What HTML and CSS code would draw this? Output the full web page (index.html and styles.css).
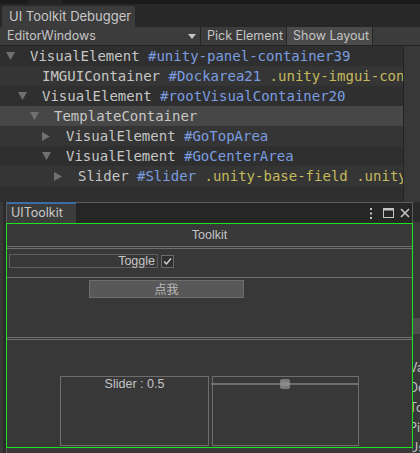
FILE: index.html
```html
<!DOCTYPE html>
<html>
<head>
<meta charset="utf-8">
<link rel="stylesheet" href="styles.css">
</head>
<body>
<div class="app">
  <div class="topstrip"><span class="ts-a"></span></div>
  <div class="tabbar"><div class="tab">UI Toolkit Debugger</div></div>
  <div class="toolbar">
    <div class="dropdown"><span>EditorWindows</span><svg class="ddarrow" width="8" height="5" viewBox="0 0 8 5"><polygon points="0,0 8,0 4,5" fill="#c4c4c4"/></svg></div>
    <div class="tbtn pick">Pick Element</div>
    <div class="tbtn on">Show Layout</div>
    <div class="tfill"></div>
  </div>
  <div class="treepane">
    <div class="tree">
      <div class="row dark l0"><span class="arr"><svg width="9" height="8" viewBox="0 0 9 8"><polygon points="0,0 9,0 4.5,8" fill="#707070"/></svg></span><span class="t">VisualElement</span> <span class="n">#unity-panel-container39</span></div>
      <div class="row light l1"><span class="arr"></span><span class="t">IMGUIContainer</span> <span class="n">#Dockarea21</span> <span class="c">.unity-imgui-container</span></div>
      <div class="row dark l1"><span class="arr"><svg width="9" height="8" viewBox="0 0 9 8"><polygon points="0,0 9,0 4.5,8" fill="#707070"/></svg></span><span class="t">VisualElement</span> <span class="n">#rootVisualContainer20</span></div>
      <div class="row sel l2"><span class="arr"><svg width="9" height="8" viewBox="0 0 9 8"><polygon points="0,0 9,0 4.5,8" fill="#707070"/></svg></span><span class="t">TemplateContainer</span></div>
      <div class="row light l3"><span class="arr"><svg width="8" height="9" viewBox="0 0 8 9"><polygon points="0,0 8,4.5 0,9" fill="#707070"/></svg></span><span class="t">VisualElement</span> <span class="n">#GoTopArea</span></div>
      <div class="row dark l3"><span class="arr"><svg width="9" height="8" viewBox="0 0 9 8"><polygon points="0,0 9,0 4.5,8" fill="#707070"/></svg></span><span class="t">VisualElement</span> <span class="n">#GoCenterArea</span></div>
      <div class="row light l4"><span class="arr"><svg width="8" height="9" viewBox="0 0 8 9"><polygon points="0,0 8,4.5 0,9" fill="#707070"/></svg></span><span class="t">Slider</span> <span class="n">#Slider</span> <span class="c">.unity-base-field .unity-slider</span></div>
    </div>
    <div class="side"></div>
  </div>
  <div class="lower">
    <div class="lstrip"></div>
    <div class="lspace"></div>
    <div class="insp">
      <div class="ihead"></div>
      <div class="ibox"></div>
      <div class="ilines">
        <div class="iline">Value</div>
        <div class="iline">Default</div>
        <div class="iline">Tooltip</div>
        <div class="iline">Picking Mode</div>
        <div class="iline">Usage Hints</div>
      </div>
    </div>
  </div>

  <div class="win">
    <div class="whead">
      <div class="wtab">UIToolkit</div>
      <div class="wicons">
        <svg class="ic-kebab" width="4" height="11" viewBox="0 0 4 11"><rect x="1" y="0" width="2" height="2" fill="#c4c4c4"/><rect x="1" y="4.5" width="2" height="2" fill="#c4c4c4"/><rect x="1" y="9" width="2" height="2" fill="#c4c4c4"/></svg>
        <svg class="ic-max" width="11" height="10" viewBox="0 0 11 10"><rect x="0.5" y="0.5" width="10" height="9" fill="none" stroke="#c4c4c4"/><rect x="0" y="0" width="11" height="2.5" fill="#c4c4c4"/></svg>
        <svg class="ic-close" width="10" height="10" viewBox="0 0 10 10"><path d="M1 1L9 9M9 1L1 9" stroke="#c4c4c4" stroke-width="1.6"/></svg>
      </div>
    </div>
    <div class="wbody">
      <div class="wtitle">Toolkit</div>
      <div class="dbl"></div>
      <div class="togrow">
        <div class="toglabel">Toggle</div>
        <div class="check"><svg width="11" height="11" viewBox="0 0 11 11"><path d="M2 5.5L4.5 8L9 2.5" fill="none" stroke="#d0d0d0" stroke-width="1.5"/></svg></div>
      </div>
      <div class="btnrow"><div class="btn">点我</div></div>
      <div class="dbl"></div>
      <div class="slrow">
        <div class="sllabel">Slider : 0.5</div>
        <div class="slbox">
          <div class="sltrack"></div>
          <div class="slthumb"></div>
        </div>
      </div>
    </div>
  </div>
</div>
</body>
</html>
```

FILE: styles.css
```css
* { box-sizing: border-box; margin: 0; padding: 0; }
html, body { width: 420px; height: 453px; overflow: hidden; background: #383838; }
body { font-family: Inter, "Noto Sans", sans-serif; font-size: 12.5px; color: #c4c4c4; }
.app { position: relative; width: 420px; height: 453px; overflow: hidden; }

.topstrip { height: 4px; background: #1b1b1b; display: flex; }
.ts-a { margin-left: 28px; width: 34px; background: #242424; }

.tabbar { height: 23px; background: #282828; display: flex; align-items: flex-end; padding-left: 2px; }
.tab { height: 21px; width: 133px; background: #3c3c3c; padding-left: 7px; line-height: 20px; font-size: 13px; color: #c8c8c8; border-radius: 2px 2px 0 0; white-space: nowrap; }

.toolbar { height: 19px; background: #3c3c3c; border-bottom: 1px solid #232323; display: flex; white-space: nowrap; }
.dropdown { width: 200px; display: flex; align-items: center; justify-content: space-between; padding: 0 4px 0 7px; font-size: 12.5px; line-height: 18px; }
.tbtn { border-left: 1px solid #262626; font-size: 12.5px; line-height: 18px; padding-left: 6px; background: #3c3c3c; overflow: hidden; }
.tbtn.pick { width: 86px; }
.tbtn.on { width: 87px; background: #4b4b4b; border-right: 1px solid #262626; }
.tfill { flex: 1; }

.treepane { height: 156px; display: flex; }
.tree { width: 404px; flex: none; background: #2f2f2f; border-right: 1px solid #242424; overflow: hidden; }
.side { flex: 1; background: #383838; }
.row { height: 20px; line-height: 20px; white-space: pre; overflow: hidden; font-family: "DejaVu Sans Mono", monospace; font-size: 14px; }
.row.dark { background: #2f2f2f; }
.row.light { background: #353535; }
.row.sel { background: #474747; }
.l0 { padding-left: 6px; }
.l1 { padding-left: 18px; }
.l2 { padding-left: 30px; }
.l3 { padding-left: 42px; }
.l4 { padding-left: 54px; }
.arr { display: inline-block; width: 24px; height: 20px; vertical-align: top; }
.arr svg { display: block; margin-top: 6px; }
.t { color: #c6c6c6; }
.n { color: #7b9de0; }
.c { color: #c4ba5c; }

.lower { height: 251px; display: flex; background: #383838; }
.lstrip { width: 6px; border-left: 3px solid #383838; background: #2b2b2b; }
.lspace { flex: 1; }
.insp { width: 9px; overflow: hidden; white-space: nowrap; }
.ihead { height: 20px; background: #2a2a2a; }
.ibox { margin-top: 96px; height: 16px; width: 20px; background: #4d4d4d; }
.ilines { margin-top: 24px; margin-left: -2px; }
.iline { height: 20px; line-height: 20px; font-size: 12.5px; color: #c4c4c4; }

.win { position: absolute; left: 6px; top: 202px; width: 407px; height: 251px; background: #383838; border-left: 1px solid #5c5c5c; border-right: 1px solid #5c5c5c; display: flex; flex-direction: column; }
.whead { height: 21px; background: #262626; border-top: 1px solid #5c5c5c; display: flex; }
.wtab { width: 69px; margin-top: -1px; height: 21px; background: #3c3c3c; border-top: 2px solid #3a6ea6; padding-left: 4px; line-height: 18px; font-size: 12.5px; color: #c8c8c8; }
.wicons { margin-left: auto; display: flex; align-items: center; padding-right: 2px; }
.ic-kebab { margin-right: 10px; }
.ic-max { margin-right: 6px; }

.wbody { margin-left: -1px; margin-right: -1px; height: 225px; border: 1px solid #1fe11f; display: flex; flex-direction: column; font-family: "Liberation Sans", Arial, sans-serif; font-size: 12.5px; color: #c4c4c4; }
.wtitle { height: 22px; line-height: 22px; text-align: center; }
.dbl { height: 3px; border-top: 1px solid #6e6e6e; border-bottom: 1px solid #6e6e6e; }
.togrow { height: 29px; border-bottom: 1px solid #6e6e6e; padding: 5px 0 0 2px; display: flex; align-items: flex-start; }
.toglabel { width: 149px; height: 14px; border: 1px solid #5e5e5e; text-align: right; padding-right: 2px; line-height: 12px; }
.check { width: 13px; height: 13px; margin-left: 3px; margin-top: 1px; border: 1px solid #6a6a6a; background: #303030; display: flex; align-items: center; justify-content: center; }
.check svg { display: block; }
.btnrow { height: 59px; padding: 2px 0 0 82px; }
.btn { width: 155px; height: 18px; background: #585858; border: 1px solid #6d6d6d; text-align: center; line-height: 16px; font-family: "Noto Sans CJK SC", sans-serif; font-size: 12px; color: #bdbdbd; }
.slrow { flex: 1; display: flex; gap: 3px; padding: 36px 0 0 53px; }
.sllabel { width: 149px; height: 70px; border: 1px solid #6e6e6e; text-align: center; line-height: 15px; }
.slbox { position: relative; width: 147px; height: 70px; border: 1px solid #6e6e6e; }
.sltrack { margin: 6px 0 0 -2px; height: 2px; background: #6e6e6e; }
.slthumb { position: absolute; left: 67px; top: 2px; width: 10px; height: 10px; border-radius: 3px; background: #8c8c8c; box-shadow: inset 0 -3px 0 #7a7a7a, inset 0 3px 0 #7a7a7a; }
```
